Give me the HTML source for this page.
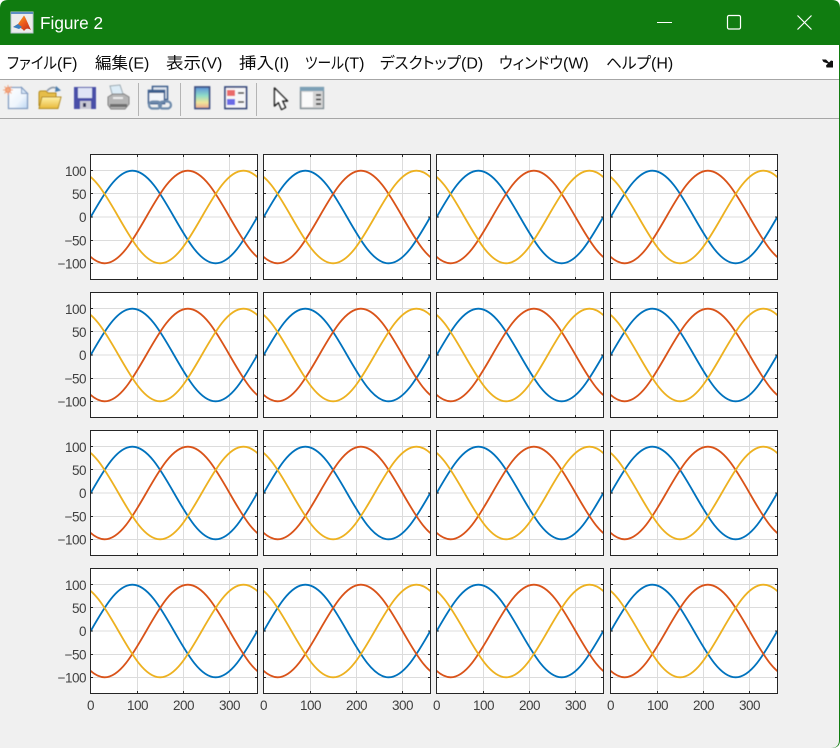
<!DOCTYPE html>
<html><head><meta charset="utf-8"><title>Figure 2</title>
<style>
html,body{margin:0;padding:0;background:#fff;width:840px;height:748px;overflow:hidden}
svg{display:block}
.m{font-family:"Liberation Sans","Noto Sans CJK JP",sans-serif;font-size:16px;fill:#0c0c0c;font-feature-settings:"palt"}
.t{font-family:"Liberation Sans",sans-serif;font-size:13.5px;fill:#404040;letter-spacing:-.5px}
.e{text-anchor:end}
.c{text-anchor:middle}
.l{fill:none;stroke-width:1.8}
</style></head><body>
<svg width="840" height="748" viewBox="0 0 840 748" xmlns="http://www.w3.org/2000/svg">
<defs>
<filter id="soft" x="-5%" y="-20%" width="110%" height="140%"><feGaussianBlur stdDeviation=".4"/></filter>
<linearGradient id="cb" x1="0" y1="0" x2="0" y2="1"><stop offset="0" stop-color="#5a8fd8"/><stop offset=".4" stop-color="#8fdcc8"/><stop offset=".72" stop-color="#f0e69a"/><stop offset="1" stop-color="#eda58e"/></linearGradient>
<linearGradient id="doc" x1="0" y1="0" x2="1" y2="1"><stop offset="0" stop-color="#fff"/><stop offset=".6" stop-color="#eef5fd"/><stop offset="1" stop-color="#bcd6f2"/></linearGradient>
<linearGradient id="fo" x1="0" y1="0" x2="0" y2="1"><stop offset="0" stop-color="#fff2a8"/><stop offset="1" stop-color="#e8b93a"/></linearGradient>
<linearGradient id="ml" x1="0" y1="0" x2="1" y2="1"><stop offset="0" stop-color="#f6c022"/><stop offset=".55" stop-color="#ec5a1c"/><stop offset="1" stop-color="#b8281a"/></linearGradient>
<path id="w" vector-effect="non-scaling-stroke" d="M-360 0C-330.65 51.23-302.57 100-270 100C-237.43 100-209.35 51.23-180 0C-150.65-51.23-122.57-100-90-100C-57.43-100-29.35-51.23 0 0C29.35 51.23 57.43 100 90 100C122.57 100 150.65 51.23 180 0C209.35-51.23 237.43-100 270-100C302.57-100 330.65-51.23 360 0"/>
<g id="a">
<rect x="0" y="0" width="168" height="126" fill="#fff"/>
<path d="M47.5 0V125M93.5 0V125M139.5 0V125M0 16.5H167M0 39.5H167M0 63H167M0 86.5H167M0 109.5H167" stroke="#dcdcdc" stroke-width="1" fill="none"/>
<svg x=".7" y="0.5" width="166.6" height="125" viewBox="0 -135 360 270" preserveAspectRatio="none">
<g transform="scale(1,-1)">
<use href="#w" class="l" stroke="#0072bd"/>
<use href="#w" class="l" stroke="#d95319" transform="translate(120 0)"/>
<use href="#w" class="l" stroke="#edb120" transform="translate(240 0)"/>
</g>
</svg>
<path d="M.5 .5H167.5V125.5H.5Z" fill="none" stroke="#262626" stroke-width="1"/>
<path d="M47.5 1V3M93.5 1V3M139.5 1V3M47.5 125V123M93.5 125V123M139.5 125V123M1 16.5H3M1 39.5H3M1 63H3M1 86.5H3M1 109.5H3M167 16.5H165M167 39.5H165M167 63H165M167 86.5H165M167 109.5H165" stroke="#262626" stroke-width="1" fill="none"/>
</g>
</defs>

<!-- window -->
<rect width="840" height="748" fill="#fff"/>
<path d="M8 0H832Q840 0 840 8V740Q840 748 832 748H0V8Q0 0 8 0Z" fill="#107c10"/>
<path d="M0 45H839V740Q839 748 831 748H0Z" fill="#f0f0f0"/>
<rect x="0" y="45" width="839" height="34" fill="#fff"/>
<rect x="0" y="79" width="839" height="1" fill="#a6a6a6"/>
<rect x="0" y="80" width="839" height="38" fill="#f0f0f0"/>
<rect x="0" y="118" width="839" height="1" fill="#a6a6a6"/>

<!-- title bar -->
<rect x="11" y="12" width="22" height="21" fill="#ececec" stroke="#b8c4d0" stroke-width="1"/>
<rect x="11" y="12" width="22" height="2" fill="#5f8fc4"/>
<path d="M13 27L18 24L24 15.5C26 18 28 24 31 30C28 28 26 28 24 31C22 28 20 28 19 27.5L17 26Z" fill="url(#ml)"/>
<path d="M13 27L18 24L22 27L19 29Z" fill="#3a7ec0"/>
<text x="40" y="29" font-family="Liberation Sans,sans-serif" font-size="17.2" fill="#fff">Figure 2</text>
<path d="M657 22.5H672" stroke="#fff" stroke-width="1"/>
<rect x="727.5" y="15.5" width="13" height="13.5" rx="1.5" fill="none" stroke="#fff" stroke-width="1.2"/>
<path d="M797.5 15.5L811.5 29.5M811.5 15.5L797.5 29.5" stroke="#fff" stroke-width="1.2" fill="none"/>

<!-- menu -->
<text class="m" x="7" y="68.500" textLength="50" lengthAdjust="spacingAndGlyphs">ファイル</text><text class="m" x="57" y="68.500">(F)</text>
<text class="m" x="95" y="68.500" textLength="33" lengthAdjust="spacingAndGlyphs">編集</text><text class="m" x="128" y="68.500">(E)</text>
<text class="m" x="166" y="68.500" textLength="35" lengthAdjust="spacingAndGlyphs">表示</text><text class="m" x="201" y="68.500">(V)</text>
<text class="m" x="239" y="68.500" textLength="35" lengthAdjust="spacingAndGlyphs">挿入</text><text class="m" x="274" y="68.500">(I)</text>
<text class="m" x="305" y="68.500" textLength="39" lengthAdjust="spacingAndGlyphs">ツール</text><text class="m" x="344" y="68.500">(T)</text>
<text class="m" x="380" y="68.500" textLength="81" lengthAdjust="spacingAndGlyphs">デスクトップ</text><text class="m" x="461" y="68.500">(D)</text>
<text class="m" x="499" y="68.500" textLength="64" lengthAdjust="spacingAndGlyphs">ウィンドウ</text><text class="m" x="563" y="68.500">(W)</text>
<text class="m" x="606" y="68.500" textLength="45" lengthAdjust="spacingAndGlyphs">ヘルプ</text><text class="m" x="651" y="68.500">(H)</text>
<path d="M822 59.5H826L829 62.5L831 60.5L833 61V67.5H826.5L826 65.5L828 63.5L825 62.5L823.5 62Z" fill="#111"/>

<g filter="url(#soft)">
<!-- toolbar: new -->
<path d="M8.5 87.5H21.5L27.5 93.5V108.5H8.5Z" fill="url(#doc)" stroke="#7f9ac0" stroke-width="1.300"/>
<path d="M21.5 87.5V93.5H27.5Z" fill="#d4e4f6" stroke="#7f9ac0" stroke-width="1"/>
<circle cx="8" cy="90" r="3" fill="#f0743c"/>
<path d="M8 85V95M3 90H13M4.5 86.5L11.5 93.5M11.5 86.5L4.5 93.5" stroke="#f2a982" stroke-width="1"/>
<!-- open -->
<path d="M39 106V93Q39 91 41 91H46L48 93H56V97" fill="#e6bd4a" stroke="#b28a1e" stroke-width="1"/>
<path d="M39 108.5L42 97H61L58 108.5Z" fill="url(#fo)" stroke="#b28a1e" stroke-width="1"/>
<path d="M47 91Q52 85 58 89" fill="none" stroke="#8d9aa8" stroke-width="1.6"/>
<path d="M56 86L61 90.5L55 92Z" fill="#4d7fae"/>
<!-- save -->
<rect x="74" y="87" width="22" height="22" fill="#4a50a8"/>
<rect x="78" y="88" width="14" height="10" fill="#dfe4f6"/>
<rect x="80" y="101" width="11" height="8" fill="#c8c8d4"/>
<rect x="83" y="103" width="3" height="4" fill="#33365a"/>
<!-- print -->
<path d="M110 86L120 85L124 97H113Z" fill="#dcecf6" stroke="#9aa8b0" stroke-width="1"/>
<path d="M108 97L113 94H124L129 97V104L125 109H111L108 105Z" fill="#b4b4b4" stroke="#808080" stroke-width="1"/>
<rect x="110" y="104" width="17" height="3" fill="#6e6e6e"/>
<rect x="113" y="97" width="10" height="2" fill="#ececec"/>
<!-- link -->
<rect x="152.500" y="86.500" width="15" height="13" fill="#dfe6ef" stroke="#3e5f8e" stroke-width="1.6"/>
<rect x="148.500" y="90.500" width="16" height="13" fill="#f2f5fa" stroke="#3e5f8e" stroke-width="1.6"/>
<rect x="148" y="90" width="17" height="3" fill="#3e5f8e"/>
<rect x="149" y="101.500" width="12" height="7" rx="3.500" fill="none" stroke="#6d8aab" stroke-width="2.200"/>
<rect x="159" y="101.500" width="12" height="7" rx="3.500" fill="none" stroke="#6d8aab" stroke-width="2.200"/>
<!-- colorbar -->
<rect x="195" y="87" width="14.500" height="21.500" fill="url(#cb)" stroke="#3e4f82" stroke-width="1.700"/>
<!-- legend -->
<rect x="225" y="87" width="21.500" height="21.500" fill="#f6f6f8" stroke="#34467c" stroke-width="1.700"/>
<rect x="227" y="90" width="8" height="6" fill="#ea6a6a"/>
<rect x="227" y="99" width="8" height="6" fill="#6a6ae6"/>
<path d="M238 93H244M238 102H244" stroke="#333" stroke-width="1.500"/>
<!-- cursor -->
<path d="M274.500 88V106L278.500 102.500L281.500 109.500L285.500 107.500L282.500 101H287.500Z" fill="#fff" stroke="#1a1a1a" stroke-width="1.500" stroke-linejoin="round"/>
<!-- panel -->
<rect x="300.500" y="87.500" width="23" height="21" fill="#d4d4d4" stroke="#7d8a92" stroke-width="1.300"/>
<rect x="300" y="87" width="24" height="4" fill="#7ba0b6"/>
<rect x="302" y="92" width="11" height="15" fill="#fafafa"/>
<path d="M316 95H321M316 99.500H321M316 104H321" stroke="#444" stroke-width="1.700"/>
</g>
<!-- separators -->
<path d="M138.500 83V116M180.500 83V116M256.500 83V116" stroke="#b4b4b4" stroke-width="1"/>

<!-- axes -->
<use href="#a" x="90" y="154"/><use href="#a" x="263" y="154"/><use href="#a" x="436" y="154"/><use href="#a" x="610" y="154"/>
<use href="#a" x="90" y="292"/><use href="#a" x="263" y="292"/><use href="#a" x="436" y="292"/><use href="#a" x="610" y="292"/>
<use href="#a" x="90" y="430"/><use href="#a" x="263" y="430"/><use href="#a" x="436" y="430"/><use href="#a" x="610" y="430"/>
<use href="#a" x="90" y="568"/><use href="#a" x="263" y="568"/><use href="#a" x="436" y="568"/><use href="#a" x="610" y="568"/>

<!-- y labels -->
<text class="t e" x="86" y="176">100</text><text class="t e" x="86" y="199">50</text><text class="t e" x="86" y="222">0</text><text class="t e" x="86" y="245.500">−50</text><text class="t e" x="86" y="268.500">−100</text>
<text class="t e" x="86" y="314">100</text><text class="t e" x="86" y="337">50</text><text class="t e" x="86" y="360">0</text><text class="t e" x="86" y="383.500">−50</text><text class="t e" x="86" y="406.500">−100</text>
<text class="t e" x="86" y="452">100</text><text class="t e" x="86" y="475">50</text><text class="t e" x="86" y="498">0</text><text class="t e" x="86" y="521.500">−50</text><text class="t e" x="86" y="544.500">−100</text>
<text class="t e" x="86" y="590">100</text><text class="t e" x="86" y="613">50</text><text class="t e" x="86" y="636">0</text><text class="t e" x="86" y="659.500">−50</text><text class="t e" x="86" y="682.500">−100</text>
<!-- x labels -->
<text class="t c" x="90.500" y="710">0</text><text class="t c" x="137.500" y="710">100</text><text class="t c" x="183.500" y="710">200</text><text class="t c" x="229.500" y="710">300</text>
<text class="t c" x="263.500" y="710">0</text><text class="t c" x="310.500" y="710">100</text><text class="t c" x="356.500" y="710">200</text><text class="t c" x="402.500" y="710">300</text>
<text class="t c" x="436.500" y="710">0</text><text class="t c" x="483.500" y="710">100</text><text class="t c" x="529.500" y="710">200</text><text class="t c" x="575.500" y="710">300</text>
<text class="t c" x="610.500" y="710">0</text><text class="t c" x="657.500" y="710">100</text><text class="t c" x="703.500" y="710">200</text><text class="t c" x="749.500" y="710">300</text>
</svg>
</body></html>
